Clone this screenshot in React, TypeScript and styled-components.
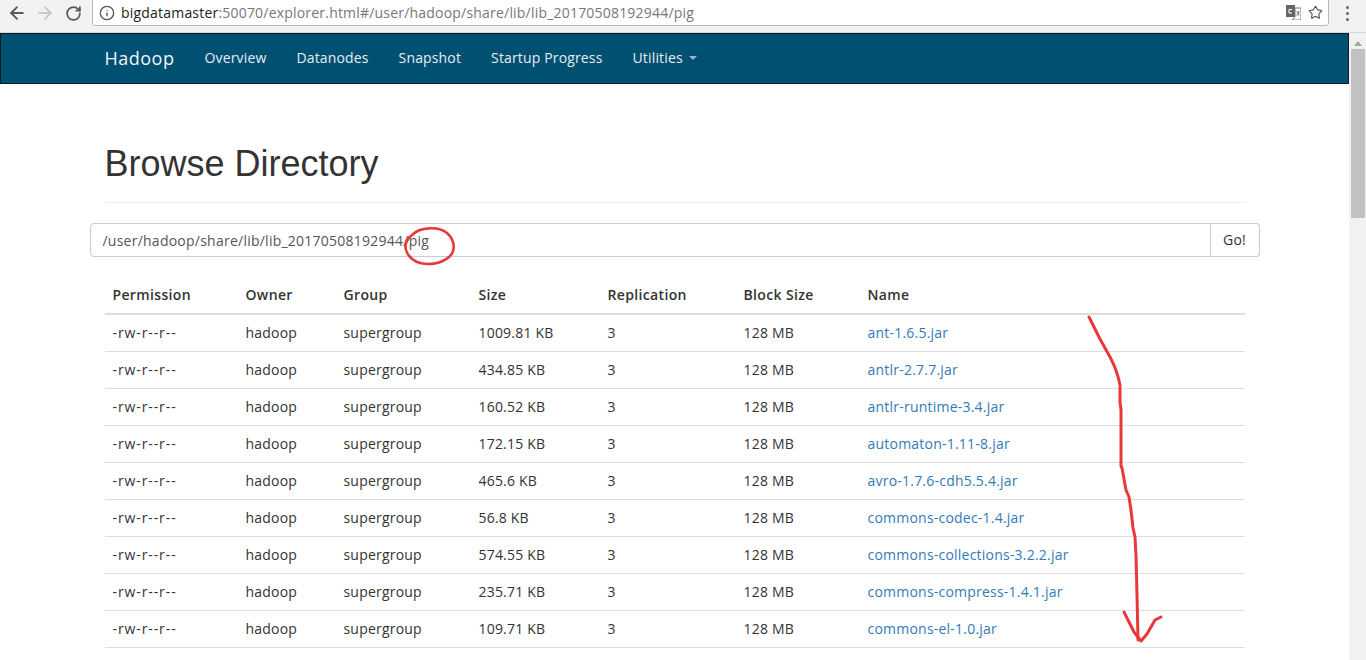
import React from "react";
import styled, { createGlobalStyle } from "styled-components";
import { ArrowLeft, ArrowRight, RotateCw, Info, Star } from "lucide-react";

const Global = createGlobalStyle`
  html, body { margin: 0; padding: 0; height: 660px; overflow: hidden; background: #fff; }
  body { font-family: "Open Sans", "Liberation Sans", sans-serif; font-size: 14px; color: #333; letter-spacing: 0.2px; }
  * { box-sizing: border-box; }
`;
const Shell = styled.div`position: relative; width: 1366px; height: 660px; overflow: hidden; display: flex; flex-direction: column;`;
const ChromeBar = styled.div`height: 33px; flex: none; background: #f2f2f2; border-bottom: 1px solid #d6d6d6; display: flex; align-items: flex-start; padding: 0 0 0 3px;`;
const NavIcon = styled.span<{ $dim?: boolean }>`
  width: 28px; height: 26px; display: flex; align-items: center; justify-content: center;
  color: ${(p) => (p.$dim ? "#c9c9c9" : "#5a5a5a")}; flex: none;
`;
const Omnibox = styled.div`
  margin-left: 5px; margin-top: -1px; width: 1237px; height: 27px; background: #fff; border: 1px solid #b9b9b9; border-radius: 0 0 3px 3px;
  display: flex; align-items: center; padding: 0 5px 0 6px; font-size: 14px; letter-spacing: 0.2px;
`;
const Host = styled.span`color: #222; margin-left: 6px;`;
const Path = styled.span`color: #777; flex: 1;`;
const OmniIcons = styled.div`display: flex; align-items: center; gap: 7px; color: #555;`;
const Dots = styled.div`margin-left: 17px; margin-top: 6px; display: flex; flex-direction: column; gap: 3px;`;
const Dot = styled.i`display: block; width: 3px; height: 3px; border-radius: 50%; background: #666;`;
const Body = styled.div`flex: 1; display: flex; min-height: 0;`;
const Page = styled.div`width: 1349px; flex: none; overflow: hidden;`;
const Navbar = styled.nav`height: 51px; background: #005072; border: 1px solid #0a1c26; display: flex; align-items: center; padding: 0 0 2px 103.5px;`;
const Brand = styled.a`font-size: 18px; color: #f0f6fa; width: 100px; letter-spacing: 0.5px;`;
const NavLink = styled.a`font-size: 14px; color: #e6eef2; margin-right: 30px; display: inline-flex; align-items: center; letter-spacing: 0.15px;`;
const Caret = styled.i`display: inline-block; margin-left: 6px; border-top: 4px solid #9fb6c2; border-left: 4px solid transparent; border-right: 4px solid transparent;`;
const Container = styled.div`width: 1170px; margin: 0 auto; padding: 0 15px;`;
const Header = styled.div`margin-top: 40px; border-bottom: 1px solid #eee; height: 79px;`;
const Title = styled.h1`margin: 0; font-size: 36px; font-weight: 400; line-height: 40px; color: #333; letter-spacing: 0; font-family: "Liberation Sans", Arial, sans-serif; padding-top: 20px;`;
const InputGroup = styled.div`display: flex; margin: 20px -15px 0; height: 34px;`;
const PathInput = styled.div`flex: 1; border: 1px solid #ccc; border-radius: 4px 0 0 4px; padding: 0 12px; color: #555; line-height: 33px; font-size: 14px; letter-spacing: 0.24px;`;
const GoButton = styled.div`width: 49px; border: 1px solid #ccc; border-left: 0; border-radius: 0 4px 4px 0; text-align: center; line-height: 32px; color: #333;`;
const Table = styled.table`width: 1140px; margin-top: 20px; border-collapse: collapse; table-layout: fixed;`;
const Th = styled.th<{ $w: number }>`width: ${(p) => p.$w}px; text-align: left; font-weight: 600; padding: 8px; height: 37px; border-bottom: 2px solid #ddd; line-height: 20px; letter-spacing: 0.35px;`;
const Td = styled.td`padding: 8px; height: 37px; line-height: 20px; border-bottom: 1px solid #ddd; white-space: nowrap;`;
const PermCell = styled(Td)`letter-spacing: 0.9px;`;
const FileLink = styled.a`color: #337ab7; letter-spacing: 0.22px;`;
const Scrollbar = styled.div`width: 17px; flex: none; background: #f1f1f1; padding-top: 8px; display: flex; flex-direction: column; align-items: center;`;
const ScrollArrow = styled.i`border-bottom: 5px solid #a3a3a3; border-left: 4px solid transparent; border-right: 4px solid transparent;`;
const Thumb = styled.div`width: 14px; height: 169px; margin-top: 3px; background: #c1c1c1;`;
const Ink = styled.svg`position: absolute; left: 0; top: 0; pointer-events: none;`;

const columns: [string, number][] = [["Permission", 133], ["Owner", 98], ["Group", 135], ["Size", 129], ["Replication", 136], ["Block Size", 124], ["Name", 385]];
const rows: [string, string][] = [
  ["1009.81 KB", "ant-1.6.5.jar"],
  ["434.85 KB", "antlr-2.7.7.jar"],
  ["160.52 KB", "antlr-runtime-3.4.jar"],
  ["172.15 KB", "automaton-1.11-8.jar"],
  ["465.6 KB", "avro-1.7.6-cdh5.5.4.jar"],
  ["56.8 KB", "commons-codec-1.4.jar"],
  ["574.55 KB", "commons-collections-3.2.2.jar"],
  ["235.71 KB", "commons-compress-1.4.1.jar"],
  ["109.71 KB", "commons-el-1.0.jar"],
];

export default function App() {
  return (
    <Shell>
      <Global />
      <ChromeBar>
        <NavIcon><ArrowLeft size={20} strokeWidth={2.3} /></NavIcon>
        <NavIcon $dim><ArrowRight size={20} strokeWidth={2.3} /></NavIcon>
        <NavIcon><RotateCw size={17} strokeWidth={2.5} /></NavIcon>
        <Omnibox>
          <Info size={16} color="#555" strokeWidth={2} />
          <Host>bigdatamaster</Host>
          <Path>:50070/explorer.html#/user/hadoop/share/lib/lib_20170508192944/pig</Path>
          <OmniIcons>
            <svg width="15" height="15" viewBox="0 0 15 15">
              <rect x="0" y="0" width="9" height="12" fill="#666" />
              <path d="M9 3h6v12H6l3-3z" fill="#fff" stroke="#777" strokeWidth="1" />
              <path d="M6 4.5H3v3.5h3" fill="none" stroke="#fff" strokeWidth="1" />
              <path d="M10.5 7h3M12 6v1M13 7c-.5 2-1.5 3-2.5 3.500M11 8c.5 1 1.500 2 2.500 2.300" fill="none" stroke="#666" strokeWidth=".9" />
            </svg>
            <Star size={15} strokeWidth={1.8} />
          </OmniIcons>
        </Omnibox>
        <Dots><Dot /><Dot /><Dot /></Dots>
      </ChromeBar>
      <Body>
        <Page>
          <Navbar>
            <Brand>Hadoop</Brand>
            <NavLink>Overview</NavLink>
            <NavLink>Datanodes</NavLink>
            <NavLink>Snapshot</NavLink>
            <NavLink>Startup Progress</NavLink>
            <NavLink>Utilities<Caret /></NavLink>
          </Navbar>
          <Container>
            <Header><Title>Browse Directory</Title></Header>
            <InputGroup>
              <PathInput>/user/hadoop/share/lib/lib_20170508192944/pig</PathInput>
              <GoButton>Go!</GoButton>
            </InputGroup>
            <Table>
              <thead>
                <tr>{columns.map(([n, w]) => <Th key={n} $w={w}>{n}</Th>)}</tr>
              </thead>
              <tbody>
                {rows.map(([size, name]) => (
                  <tr key={name}>
                    <PermCell>-rw-r--r--</PermCell>
                    <Td>hadoop</Td>
                    <Td>supergroup</Td>
                    <Td>{size}</Td>
                    <Td>3</Td>
                    <Td>128 MB</Td>
                    <Td><FileLink>{name}</FileLink></Td>
                  </tr>
                ))}
              </tbody>
            </Table>
          </Container>
        </Page>
        <Scrollbar><ScrollArrow /><Thumb /></Scrollbar>
      </Body>
      <Ink width="1366" height="660" viewBox="0 0 1366 660" fill="none" stroke="#e8383a" strokeLinecap="round" strokeLinejoin="round">
        <path d="M412 235C420 227 438 226 447 233C455 240 456 251 449 257C441 264 427 266 417 262C408 258 404 249 406 243C407 240 409 237 412 235" strokeWidth="2.6" />
        <path d="M1089 317L1100 339L1110 357C1116 368 1119 380 1120 385L1120 402L1121 410L1121 440L1121 466L1122 468L1126 490L1129 497L1131 510L1133 528L1135 537L1136 556L1137 595L1138 640" strokeWidth="3" />
        <path d="M1124 612L1134 632L1141 641L1147 634L1151 627L1155 620L1161 617" strokeWidth="3" />
      </Ink>
    </Shell>
  );
}
